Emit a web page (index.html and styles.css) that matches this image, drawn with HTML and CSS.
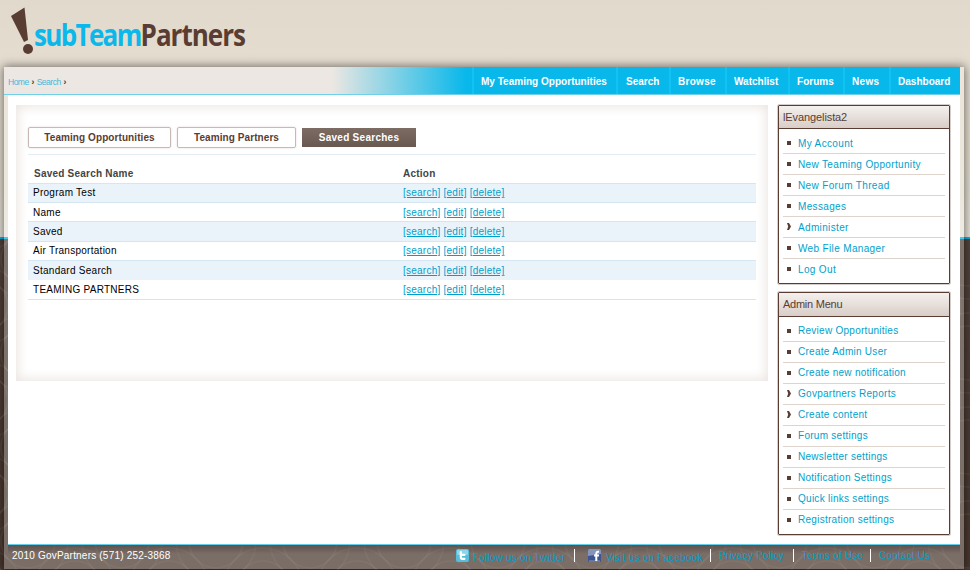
FILE: index.html
```
<!DOCTYPE html>
<html lang="en">
<head>
<meta charset="utf-8">
<title>subTeamPartners - Saved Searches</title>
<link rel="stylesheet" href="styles.css">
</head>
<body>
<svg class="pattern" width="970" height="331" aria-hidden="true">
  <defs>
    <pattern id="rings" width="94" height="94" patternUnits="userSpaceOnUse" x="28" y="20">
      <g fill="none" stroke="#fff" stroke-opacity=".06" stroke-width="1.5">
        <circle cx="47" cy="47" r="14"/><circle cx="47" cy="47" r="27"/><circle cx="47" cy="47" r="40"/>
        <circle cx="0" cy="0" r="27"/><circle cx="94" cy="0" r="27"/><circle cx="0" cy="94" r="27"/><circle cx="94" cy="94" r="27"/>
        <circle cx="0" cy="0" r="40"/><circle cx="94" cy="0" r="40"/><circle cx="0" cy="94" r="40"/><circle cx="94" cy="94" r="40"/>
      </g>
    </pattern>
  </defs>
  <rect width="970" height="331" fill="url(#rings)"/>
</svg>
<header class="brand">
  <svg class="mark" width="24" height="48" viewBox="0 0 24 48" aria-hidden="true"><path d="M1 9 14.500 0.500 18 33 14 35Z" fill="#593d33"/><circle cx="18" cy="42" r="5" fill="#593d33"/></svg>
  <span class="logo"><span class="sub">subTeam</span>Partners</span>
</header>
<div class="wrap">
  <div class="bar">
    <div class="crumbs"><a>Home</a><b>›</b><a>Search</a><b>›</b></div>
    <nav>
      <a class="n1"><span>My Teaming Opportunities</span></a><a class="n2"><span>Search</span></a><a class="n3"><span>Browse</span></a><a class="n4"><span>Watchlist</span></a><a class="n5"><span>Forums</span></a><a class="n6"><span>News</span></a><a class="n7"><span>Dashboard</span></a>
    </nav>
  </div>
  <div class="content">
    <main class="panel">
      <div class="tabs"><a class="t1">Teaming Opportunities</a><a class="t2">Teaming Partners</a><a class="t3">Saved Searches</a></div>
      <div class="table">
        <div class="head"><span>Saved Search Name</span><span>Action</span></div>
        <div class="row odd"><span>Program Test</span><span class="act"><a>[search]</a> <a>[edit]</a> <a>[delete]</a></span></div>
        <div class="row low"><span>Name</span><span class="act"><a>[search]</a> <a>[edit]</a> <a>[delete]</a></span></div>
        <div class="row odd tall"><span>Saved</span><span class="act"><a>[search]</a> <a>[edit]</a> <a>[delete]</a></span></div>
        <div class="row"><span>Air Transportation</span><span class="act"><a>[search]</a> <a>[edit]</a> <a>[delete]</a></span></div>
        <div class="row odd tall low"><span>Standard Search</span><span class="act"><a>[search]</a> <a>[edit]</a> <a>[delete]</a></span></div>
        <div class="row last"><span class="caps">TEAMING PARTNERS</span><span class="act"><a>[search]</a> <a>[edit]</a> <a>[delete]</a></span></div>
      </div>
    </main>
    <aside>
      <section class="box user">
        <h2>lEvangelista2</h2>
        <ul><li>My Account</li><li>New Teaming Opportunity</li><li>New Forum Thread</li><li>Messages</li><li class="more">Administer</li><li>Web File Manager</li><li>Log Out</li></ul>
      </section>
      <section class="box">
        <h2 class="admin">Admin Menu</h2>
        <ul><li>Review Opportunities</li><li>Create Admin User</li><li>Create new notification</li><li class="more">Govpartners Reports</li><li class="more">Create content</li><li>Forum settings</li><li>Newsletter settings</li><li>Notification Settings</li><li>Quick links settings</li><li>Registration settings</li></ul>
      </section>
    </aside>
  </div>
  <footer>
    <span class="copy">2010 GovPartners (571) 252-3868</span>
    <div class="links">
      <a class="f1"><svg width="13" height="13" viewBox="0 0 13 13"><rect width="13" height="13" rx="2" fill="#56bddb"/><rect x="1" y="1" width="11" height="5" rx="1" fill="#8bd7e9"/><path d="M4.800 3V8.300Q4.800 9.800 6.500 9.800H8.500M5 5.800H8.500" fill="none" stroke="#fff" stroke-width="2.200" stroke-linecap="round"/></svg><span>Follow us on Twitter</span></a>
      <a class="f2"><svg width="13" height="13" viewBox="0 0 13 13"><rect width="13" height="13" rx="1" fill="#3d5590"/><path d="M0 1 1 0H12L13 1V5L0 7Z" fill="#8494ba"/><path d="M1 12H12" stroke="#8b9bc3"/><path d="M11 2.800H9.700Q8.300 2.800 8.300 4.300V12M6 6.500H11" fill="none" stroke="#fff" stroke-width="2"/></svg><span>Visit us on Facebook</span></a>
      <a class="f3"><span>Privacy Policy</span></a>
      <a class="f4"><span>Terms of Use</span></a>
      <a class="f5"><span>Contact Us</span></a>
    </div>
  </footer>
</div>
</body>
</html>
```
FILE: styles.css
```
* { box-sizing: border-box; }
body {
  margin: 0; width: 970px; height: 570px; overflow: hidden; position: relative;
  font: 10px/12px "Liberation Sans", Arial, sans-serif; letter-spacing: .27px; color: #000;
  background: linear-gradient(#e1d9cc 0, #e4dccf 55px, #e4ded0 190px, #e7e3da 237px, #00b6e6 237px, #00b6e6 239px, #53423a 239px, #4c3b33 430px, #49382f 100%);
}
.pattern { position: absolute; left: 0; top: 239px; }
.brand { height: 67px; display: flex; padding: 7px 0 0 10px; }
.mark { flex: none; }
.logo { font: bold 31px/40px "Open Sans", sans-serif; letter-spacing: -1.2px; color: #593d33; margin-top: 7px; white-space: nowrap; transform: scaleX(.84); transform-origin: left; }
.logo .sub { color: #0bb8ec; letter-spacing: -2px; }
.wrap { position: relative; width: 960px; height: 502px; margin-left: 4px; background: rgba(255,255,255,.27); box-shadow: 0 0 9px 1px rgba(0,0,0,.5); }
.bar { width: 956px; height: 28px; display: flex; justify-content: space-between; border-bottom: 1px solid #6fd0ea; background: linear-gradient(90deg, #ece7e2 0, #ece7e2 328px, #08b8eb 462px); }
.crumbs { padding: 9px 0 0 4px; display: flex; font-size: 8.500px; letter-spacing: -.5px; color: #45b9df; }
.crumbs b { color: #333; width: 8px; text-align: center; }
nav { display: flex; color: #fff; font-weight: bold; letter-spacing: .02px; }
nav a { border-left: 2px solid #10c3f2; padding: 9px 0 0 7px; white-space: nowrap; }
.n1 { width: 144px; } .n2 { width: 53px; padding-left: 8px; } .n3 { width: 56px; letter-spacing: .3px; } .n4 { width: 63px; } .n5 { width: 55px; } .n6 { width: 46px; letter-spacing: .3px; } .n7 { width: 71px; }
.content { margin-left: 4px; width: 952px; height: 449px; background: #fff; display: flex; gap: 10px; padding: 10px 10px 0 8px; }
.panel { width: 752px; height: 276px; padding: 22px 12px 0; background: #fff; box-shadow: inset 0 0 11px 2px #ebe5e1; }
.tabs { display: flex; gap: 6px; height: 28px; border-bottom: 1px solid #e2edf4; letter-spacing: .08px; }
.tabs a { height: 21px; border: 1px solid #c8b9b4; border-radius: 2px; text-align: center; font-weight: bold; line-height: 20px; color: #593d33; box-shadow: 0 0 2px #ddd2ce; }
.tabs .t1 { width: 143px; } .tabs .t2 { width: 119px; }
.tabs .t3 { width: 114px; height: 19px; margin-top: 1px; border: 0; border-radius: 0; background: linear-gradient(#7d6c64, #695850); color: #fff; box-shadow: none; letter-spacing: .27px; }
.head { height: 28px; display: flex; font-weight: bold; letter-spacing: .23px; color: #444; padding: 13px 0 0 6px; }
.head span:first-child { width: 369px; }
.row { display: flex; height: 19px; padding-left: 5px; border-top: 1px solid #d3e6f2; line-height: 18px; }
.row span:first-child { width: 370px; }
.odd { background: #ebf3fa; }
.tall { height: 20px; }
.low { line-height: 20px; }
.tall:not(.low) { line-height: 20px; }
.last { height: 20px; border-top-color: #fff; border-bottom: 1px solid #d3e6f2; }
.act { color: #009fcb; letter-spacing: .24px; }
.act a { text-decoration: underline; }
.box { width: 172px; margin-bottom: 8px; border: 1px solid #593d33; outline: 1px solid #d7cecb; border-radius: 1px; padding-bottom: 3px; }
h2 { margin: 0; height: 23px; border-bottom: 1px solid #593d33; background: linear-gradient(#f4f1ee, #d9cdc7); font: 11px/22px "Liberation Sans", sans-serif; letter-spacing: -.1px; padding-left: 4px; color: #593d33; }
h2.admin { height: 24px; letter-spacing: -.25px; }
ul { list-style: none; margin: 4px 4px 0; padding: 0; letter-spacing: .27px; }
.user ul { letter-spacing: .35px; }
li { height: 21px; border-bottom: 1px solid #dfd4cb; color: #009fcb; line-height: 20px; padding-left: 4px; display: flex; white-space: nowrap; }
.user li { line-height: 22px; }
li:last-child { border-bottom-color: transparent; }
li::before { content: ""; width: 4px; height: 4px; background: #593d33; margin: 8px 7px 0 0; }
li.more::before { height: 7px; margin-top: 6px; clip-path: polygon(0 0, 50% 0, 100% 50%, 50% 100%, 0 100%, 30% 50%); }
footer { margin-left: 4px; height: 25px; width: 952px; border-top: 1px solid #66cce7; display: flex; justify-content: space-between; padding: 4px 30px 0 4px; background: linear-gradient(rgba(60,48,42,.45), rgba(124,110,102,.3) 9px, rgba(124,110,102,.35)); }
.copy { color: #fff; padding-top: 1px; letter-spacing: .2px; }
.links { display: flex; color: #009fcb; letter-spacing: .2px; }
.links a { height: 13px; white-space: nowrap; display: flex; }
.links a + a { border-left: 1px solid #fff; }
.f1 { width: 118px; gap: 4px; } .f1 span, .f2 span { padding-top: 3px; }
.f2 { width: 136px; padding-left: 13px; gap: 5px; }
.f3 { width: 83px; padding-left: 8px; } .f4 { width: 77px; padding-left: 8px; } .f5 { width: 60px; padding-left: 8px; }
.f3 span, .f4 span, .f5 span { padding-top: 1px; }
```
